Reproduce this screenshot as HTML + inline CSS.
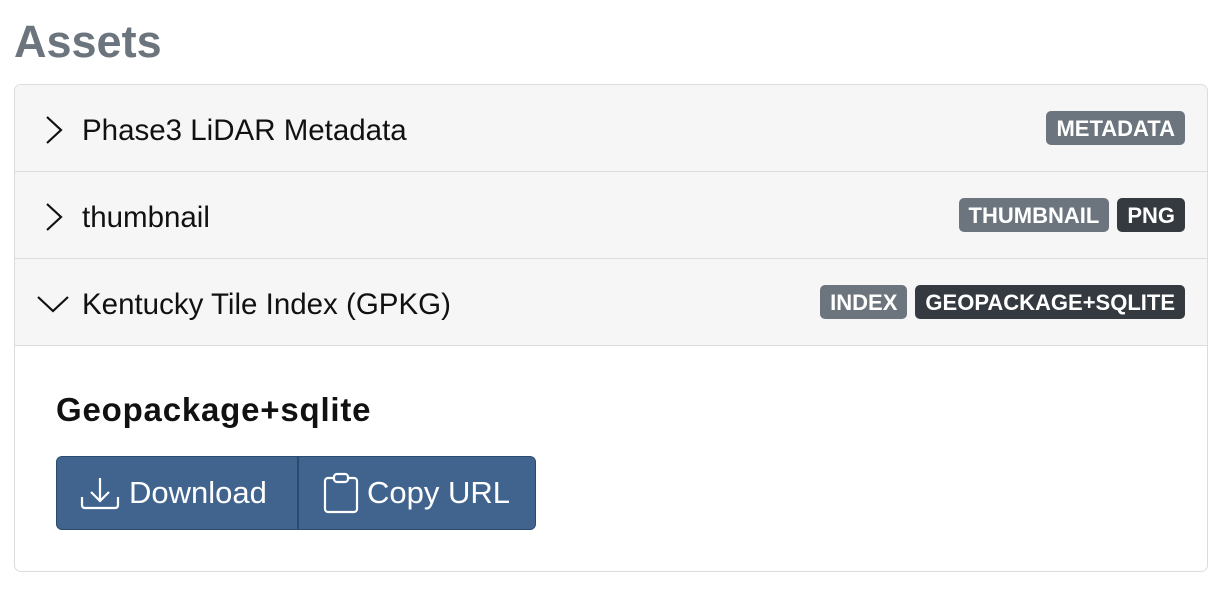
<!DOCTYPE html>
<html><head><style>
body{margin:0;background:#fff;font-family:"Liberation Sans",sans-serif;width:1230px;height:616px;overflow:hidden;position:relative}
h1{position:absolute;left:14px;top:12px;margin:0;font-size:45px;font-weight:bold;color:#6c757d;line-height:60px}
.card{position:absolute;left:14px;top:84px;width:1192px;height:486px;border:1px solid #dcdcdc;border-radius:7px;overflow:hidden}
.row{height:86px;border-bottom:1px solid #dcdcdc;background:#f6f6f6;position:relative}
.row .t{position:absolute;left:67px;top:3px;line-height:86px;font-size:29.5px;color:#111}
.row svg{position:absolute;left:24px;top:30px}
.badges{position:absolute;right:22px;top:26px;display:flex;gap:8px}
.b{height:34px;line-height:35px;padding:0 10px;border-radius:5px;color:#fff;font-weight:bold;font-size:22px}
.g{background:#6c757d}.d{background:#343a40}
h2{position:absolute;left:41px;top:306px;margin:0;font-size:33px;font-weight:bold;color:#111;letter-spacing:0.8px}
.btns{position:absolute;left:41px;top:371px;height:72px;width:478px;border:1px solid #2a4a70;border-radius:6px;background:#41648f;display:flex;overflow:hidden}
.btn{display:flex;align-items:center;color:#fff;font-size:31px;gap:8px}
</style></head><body>
<h1>Assets</h1>
<div class="card">
<div class="row"><svg width="30" height="30" viewBox="0 0 30 30"><path d="M8 2 L22 15 L8 28" fill="none" stroke="#111" stroke-width="2.2"/></svg><span class="t">Phase3 LiDAR Metadata</span><div class="badges"><span class="b g">METADATA</span></div></div>
<div class="row"><svg width="30" height="30" viewBox="0 0 30 30"><path d="M8 2 L22 15 L8 28" fill="none" stroke="#111" stroke-width="2.2"/></svg><span class="t">thumbnail</span><div class="badges"><span class="b g">THUMBNAIL</span><span class="b d">PNG</span></div></div>
<div class="row"><svg width="36" height="30" viewBox="0 0 36 30" style="left:20px"><path d="M3 8 L18 22 L33 8" fill="none" stroke="#111" stroke-width="2.2"/></svg><span class="t">Kentucky Tile Index (GPKG)</span><div class="badges"><span class="b g">INDEX</span><span class="b d">GEOPACKAGE+SQLITE</span></div></div>
<h2>Geopackage+sqlite</h2>
<div class="btns">
<div class="btn" style="width:242px;padding-left:22px;border-right:2px solid #2a4a70;box-sizing:border-box"><svg width="42" height="42" viewBox="0 0 42 42"><path d="M21 6 V28 M12 20 L21 29 L30 20 M3 25 V33 Q3 36 6 36 H36 Q39 36 39 33 V25" fill="none" stroke="#fff" stroke-width="2.2"/></svg>Download</div>
<div class="btn" style="padding-left:24px"><svg width="36" height="42" viewBox="0 0 36 42"><rect x="2" y="6" width="32" height="34" rx="3" fill="none" stroke="#fff" stroke-width="2.2"/><rect x="11" y="2" width="14" height="8" rx="3" fill="#41648f" stroke="#fff" stroke-width="2.2"/></svg>Copy URL</div>
</div>
</div>
</body></html>
